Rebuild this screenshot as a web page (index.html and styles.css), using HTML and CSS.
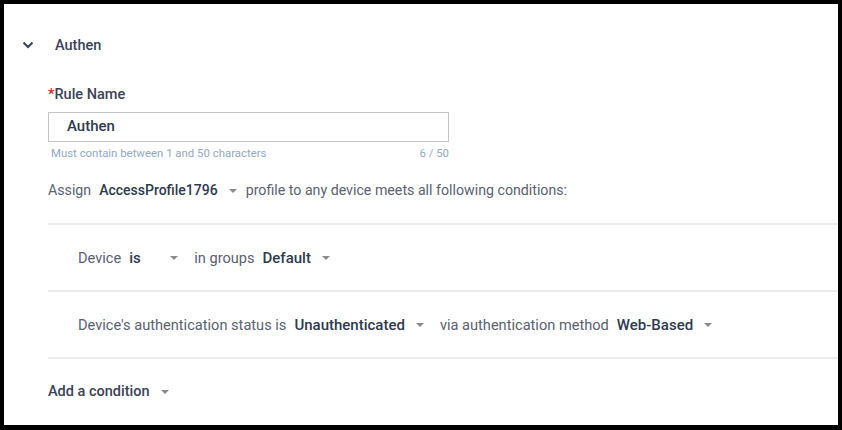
FILE: index.html
```html
<!DOCTYPE html>
<html>
<head>
<meta charset="utf-8">
<link rel="stylesheet" href="styles.css">
</head>
<body>
<div class="frame">
  <div class="header">
    <svg class="chev" width="12" height="8" viewBox="0 0 12 8"><path d="M1.5 1.5 L6 6 L10.5 1.5" fill="none" stroke="#3a4356" stroke-width="2"/></svg>
    <span class="title">Authen</span>
  </div>
  <div class="body">
    <div class="label"><span class="req">*</span>Rule Name</div>
    <div class="input">Authen</div>
    <div class="help"><span>Must contain between 1 and 50 characters</span><span>6 / 50</span></div>
    <div class="assign">
      <span class="txt">Assign</span>
      <span class="sel">AccessProfile1796</span><span class="caret"></span>
      <span class="txt">profile to any device meets all following conditions:</span>
    </div>
    <div class="conds">
      <div class="row">
        <span class="txt">Device</span>
        <span class="sel is">is</span><span class="caret"></span>
        <span class="txt">in groups</span>
        <span class="sel">Default</span><span class="caret"></span>
      </div>
      <div class="row">
        <span class="txt">Device's authentication status is</span>
        <span class="sel">Unauthenticated</span><span class="caret"></span>
        <span class="txt">via authentication method</span>
        <span class="sel">Web-Based</span><span class="caret"></span>
      </div>
    </div>
    <div class="add">
      <span class="sel add-txt">Add a condition</span><span class="caret"></span>
    </div>
  </div>
</div>
</body>
</html>
```
FILE: styles.css
```css
html, body {
  margin: 0;
  padding: 0;
  background: #fff;
}
body {
  font-family: Roboto, "Liberation Sans", sans-serif;
  color: #3a4356;
}
.frame {
  box-sizing: border-box;
  width: 842px;
  height: 430px;
  border: 4px solid #000;
  border-bottom-width: 5px;
  overflow: hidden;
}
.header {
  display: flex;
  align-items: center;
  height: 28px;
  margin-top: 27px;
  padding-left: 18px;
}
.chev {
  display: block;
}
.title {
  margin-left: 21px;
  font-size: 14.5px;
  font-weight: 500;
  color: #3a4356;
}
.body {
  padding-left: 44px;
}
.label {
  margin-top: 28px;
  font-size: 14.5px;
  font-weight: 500;
  line-height: 16px;
  color: #3a4356;
}
.req {
  color: #e02020;
}
.input {
  box-sizing: border-box;
  margin-top: 9px;
  width: 401px;
  height: 30px;
  border: 1px solid #c4c4c4;
  padding-left: 18px;
  font-size: 15px;
  font-weight: 500;
  line-height: 27px;
  color: #2f3a4e;
}
.help {
  width: 401px;
  display: flex;
  justify-content: space-between;
  margin-top: 5px;
  padding-left: 3px;
  box-sizing: border-box;
  font-size: 11.4px;
  line-height: 13px;
  color: #94a8c2;
}
.assign {
  display: flex;
  align-items: center;
  margin-top: 20px;
  height: 20px;
  font-size: 14.2px;
}
.assign .sel {
  font-size: 14px;
}
.txt {
  color: #5b6170;
}
.row .txt {
  font-size: 14.6px;
}
.sel {
  flex: none;
  font-weight: 500;
  color: #2f3a4e;
  margin-left: 8px;
}
.caret {
  flex: none;
  width: 0;
  height: 0;
  border-left: 4.5px solid transparent;
  border-right: 4.5px solid transparent;
  border-top: 4.5px solid #8a8a8a;
  margin-left: 11px;
  margin-right: 9px;
  margin-top: 1px;
}
.conds {
  margin-top: 23px;
  border-top: 2px solid #ececec;
}
.row {
  display: flex;
  align-items: center;
  height: 65px;
  padding-left: 30px;
  border-bottom: 2px solid #ececec;
  font-size: 15px;
}
.row .caret {
  margin-right: 16px;
}
.is {
  width: 30px;
}
.add {
  display: flex;
  align-items: center;
  height: 64px;
  font-size: 14.5px;
}
.add-txt {
  margin-left: 0;
  color: #3a4356;
}
```
